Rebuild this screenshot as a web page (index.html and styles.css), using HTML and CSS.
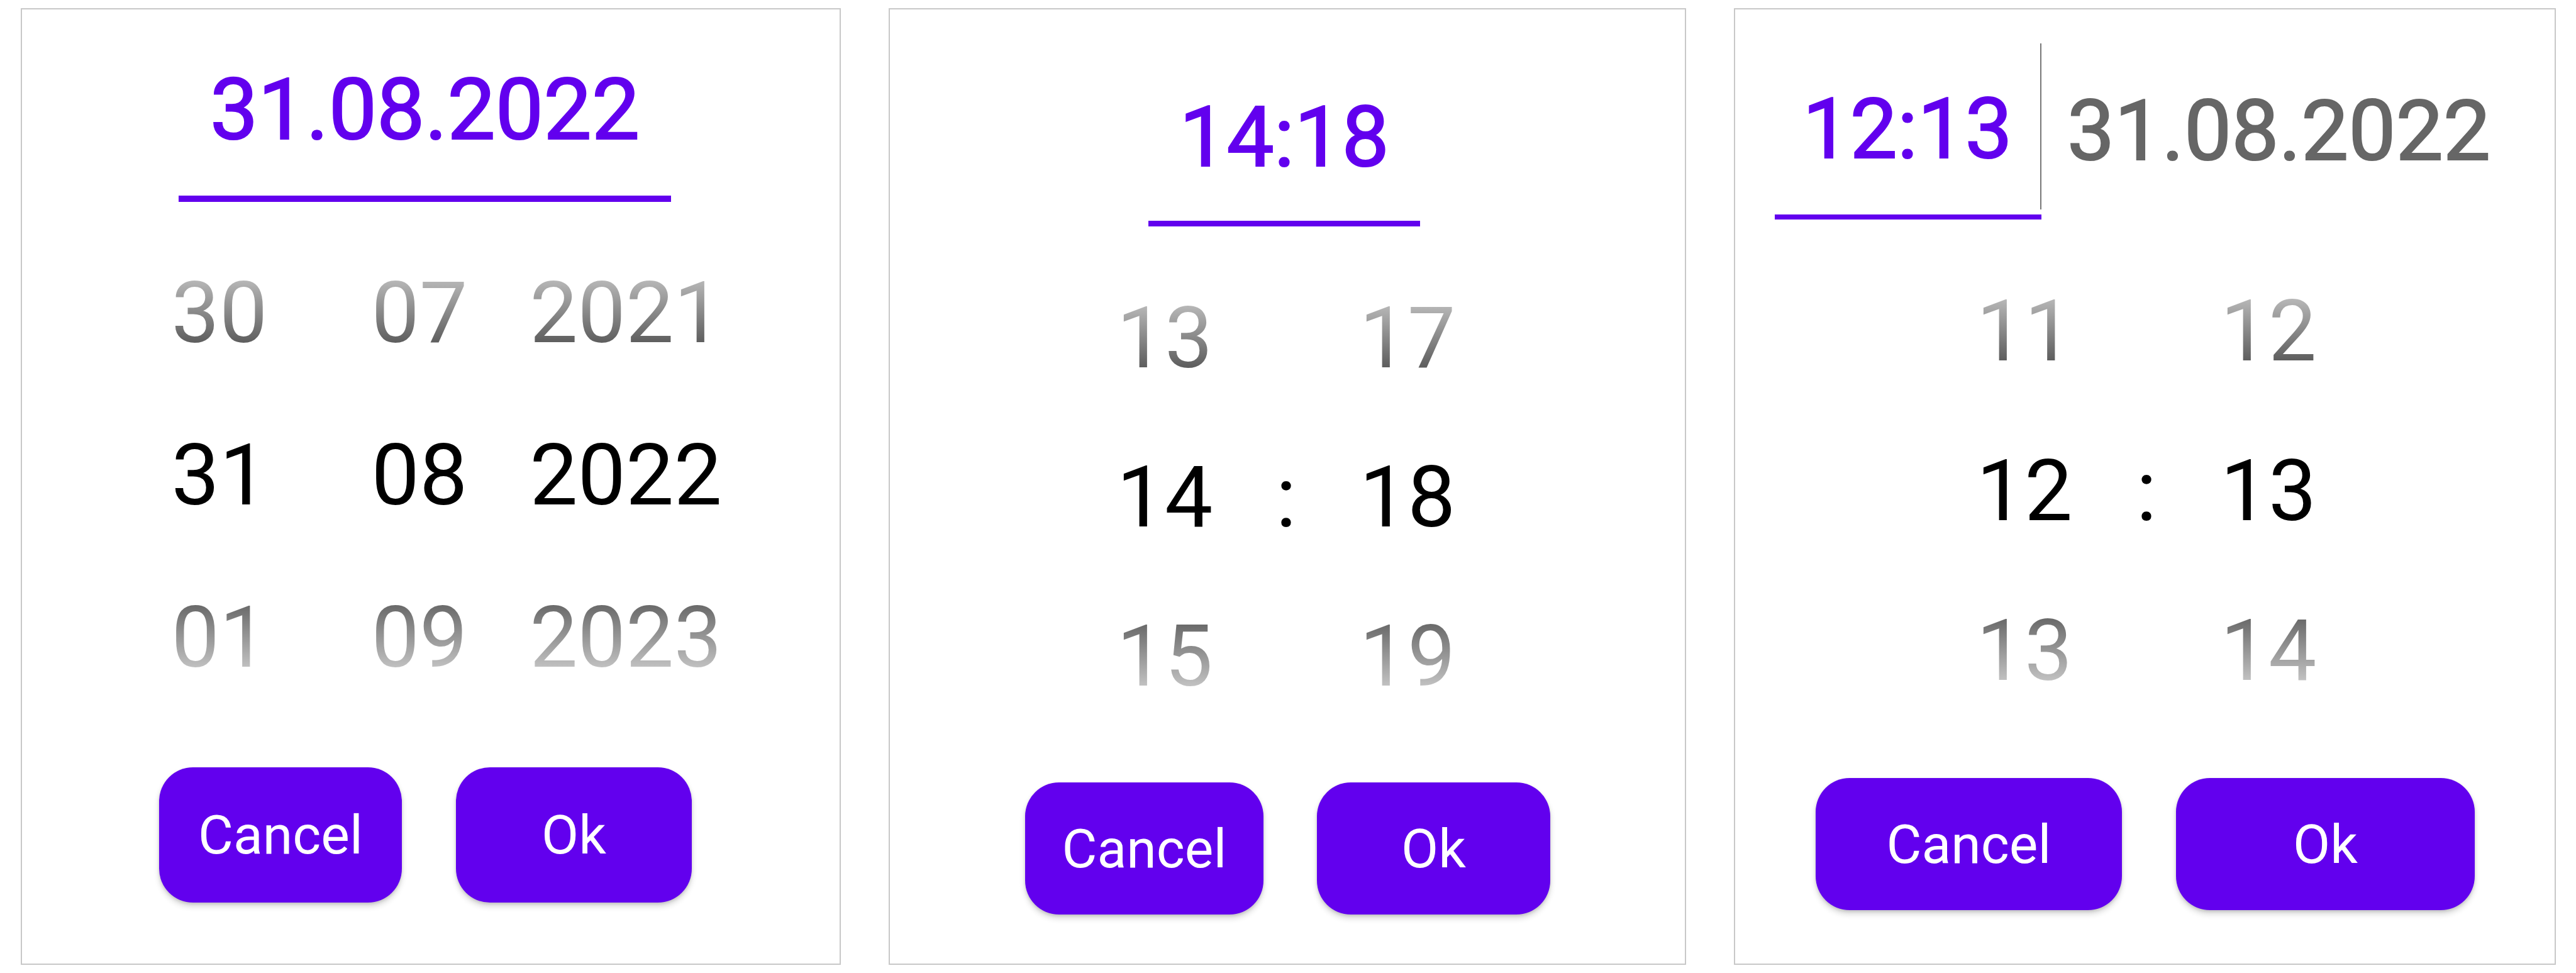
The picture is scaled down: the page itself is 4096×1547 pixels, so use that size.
FILE: index.html
```html
<!DOCTYPE html>
<html lang="en">
<head>
<meta charset="utf-8">
<title>Date and time pickers</title>
<link rel="stylesheet" href="styles.css">
</head>
<body>
<div class="board">

  <section class="picker picker--date">
    <div class="head head--date"><div class="title title--date">31.08.2022</div></div>
    <div class="wheel wheel--date">
      <div class="cell cell--prev">30</div><div class="cell cell--prev">07</div><div class="cell cell--prev">2021</div>
      <div class="cell cell--cur">31</div><div class="cell cell--cur">08</div><div class="cell cell--cur">2022</div>
      <div class="cell cell--next">01</div><div class="cell cell--next">09</div><div class="cell cell--next">2023</div>
    </div>
    <div class="actions actions--date">
      <button class="btn btn--cancel">Cancel</button>
      <button class="btn btn--ok">Ok</button>
    </div>
  </section>

  <section class="picker picker--time">
    <div class="head head--time"><div class="title title--time">14:18</div></div>
    <div class="wheel wheel--time">
      <div class="cell cell--prev">13</div><div class="cell"></div><div class="cell cell--prev">17</div>
      <div class="cell cell--cur">14</div><div class="cell cell--cur">:</div><div class="cell cell--cur">18</div>
      <div class="cell cell--next">15</div><div class="cell"></div><div class="cell cell--next">19</div>
    </div>
    <div class="actions actions--time">
      <button class="btn btn--cancel">Cancel</button>
      <button class="btn btn--ok">Ok</button>
    </div>
  </section>

  <section class="picker picker--both">
    <div class="tabs">
      <div class="tab-time"><div class="tab-time-label">12:13</div></div>
      <div class="tab-date">31.08.2022</div>
    </div>
    <div class="wheel wheel--both">
      <div class="cell cell--prev">11</div><div class="cell"></div><div class="cell cell--prev">12</div>
      <div class="cell cell--cur">12</div><div class="cell cell--cur">:</div><div class="cell cell--cur">13</div>
      <div class="cell cell--next">13</div><div class="cell"></div><div class="cell cell--next">14</div>
    </div>
    <div class="actions actions--both">
      <button class="btn btn--cancel">Cancel</button>
      <button class="btn btn--ok">Ok</button>
    </div>
  </section>

</div>
</body>
</html>
```

FILE: styles.css
```css
* { box-sizing: border-box; }

body {
  margin: 0;
  background: #ffffff;
  font-family: Roboto, "Liberation Sans", sans-serif;
}

.board {
  display: flex;
  align-items: flex-start;
  gap: 76px;
  padding: 13px 0 0 33px;
}

.picker {
  display: flex;
  flex-direction: column;
  align-items: flex-start;
  height: 1521px;
  border: 2px solid #c8c8c8;
  background: #ffffff;
}
.picker--date { width: 1304px; }
.picker--time { width: 1268px; }
.picker--both { width: 1307px; }

/* header with purple underline */
.head {
  border-bottom: 10px solid #6200ee;
}
.head--date {
  width: 783px;
  margin: 92px 0 0 249px;
  padding-bottom: 68px;
}
.head--time {
  width: 432px;
  margin: 137px 0 0 411px;
  padding-bottom: 65px;
  border-bottom-width: 9px;
}

.title {
  color: #6200ee;
  font-weight: 400;
  -webkit-text-stroke: 2.2px #6200ee;
  text-align: center;
}
.title--date { font-size: 136px; line-height: 136px; }
.title--time { font-size: 134px; line-height: 134px; }

/* combined tabs */
.tabs {
  display: flex;
  align-items: flex-start;
  padding: 54px 0 0 63px;
}
.tab-time {
  width: 424px;
  padding-bottom: 8px;
  border-bottom: 8px solid #6200ee;
}
.tab-time-label {
  height: 264px;
  padding-top: 70px;
  border-right: 2px solid #777777;
  color: #6200ee;
  -webkit-text-stroke: 2.2px #6200ee;
  font-size: 134px;
  line-height: 134px;
  text-align: center;
}
.tab-date {
  padding: 73px 0 0 41px;
  color: #666666;
  -webkit-text-stroke: 2.2px #666666;
  font-size: 134px;
  line-height: 134px;
}

/* wheels */
.wheel {
  display: grid;
  font-size: 136px;
}
.wheel--date {
  margin: 48px 0 0 155px;
  grid-template-columns: 318px 318px 338px;
  grid-auto-rows: 258px;
  line-height: 258px;
}
.wheel--time {
  margin: 51px 0 0 312px;
  grid-template-columns: 250px 136px 250px;
  grid-auto-rows: 253px;
  line-height: 253px;
}
.wheel--both {
  margin: 51px 0 0 335px;
  grid-template-columns: 250px 138px 250px;
  grid-auto-rows: 254px;
  line-height: 254px;
}

.cell {
  text-align: center;
  white-space: nowrap;
}
.cell--cur { color: #000000; }
.cell--prev {
  background: linear-gradient(to bottom, #b6b6b6 30%, #5e5e5e 68%);
  -webkit-background-clip: text;
  background-clip: text;
  color: transparent;
}
.cell--next {
  background: linear-gradient(to bottom, #6a6a6a 30%, #c0c0c0 68%);
  -webkit-background-clip: text;
  background-clip: text;
  color: transparent;
}

/* buttons */
.actions {
  display: flex;
}
.actions--date { margin: 77px 0 0 218px; gap: 86px; }
.actions--time { margin: 74px 0 0 215px; gap: 85px; }
.actions--both { margin: 75px 0 0 128px; gap: 86px; }

.btn {
  height: 210px;
  padding: 0;
  border: none;
  border-radius: 54px;
  background: #6200ee;
  color: #ffffff;
  font-family: Roboto, "Liberation Sans", sans-serif;
  font-size: 86px;
  font-weight: 400;
  box-shadow: 0 6px 10px rgba(0, 0, 0, 0.16), 0 2px 4px rgba(0, 0, 0, 0.12);
}
.actions--date .btn { height: 215px; }
.actions--date .btn--cancel { width: 386px; }
.actions--date .btn--ok { width: 375px; }
.actions--time .btn--cancel { width: 379px; }
.actions--time .btn--ok { width: 371px; }
.actions--both .btn--cancel { width: 487px; }
.actions--both .btn--ok { width: 475px; }
```
